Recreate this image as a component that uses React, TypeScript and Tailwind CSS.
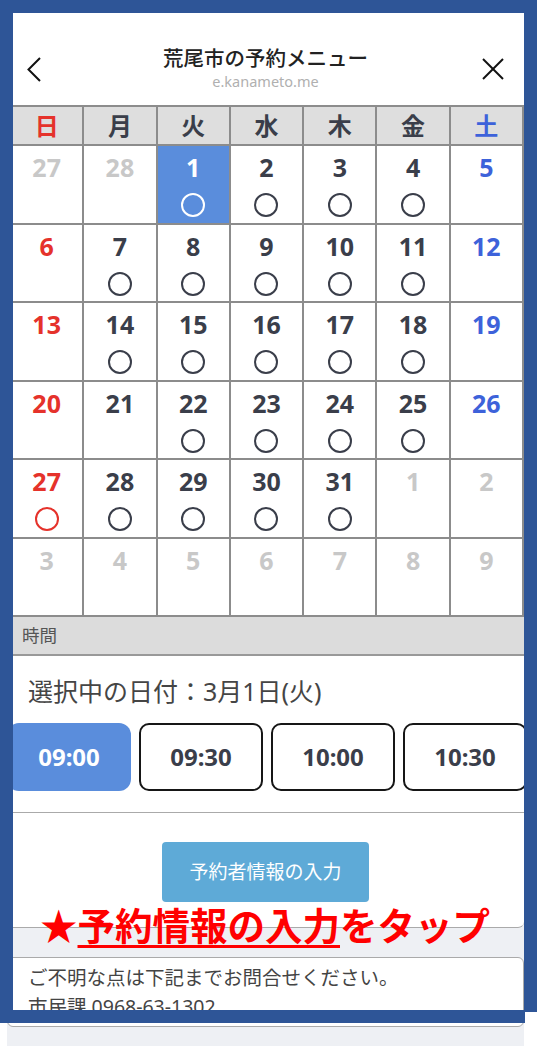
import React from "react";

type Day = { n: number; tone: "dim" | "sun" | "sat" | "normal"; mark?: boolean; selected?: boolean };

const FONT = { fontFamily: '"Noto Sans", "Noto Sans CJK JP", sans-serif' };

function buildWeeks(): Day[][] {
  const d = (n: number, tone: Day["tone"], mark = false, selected = false): Day => ({ n, tone, mark, selected });
  return [
    [d(27, "dim"), d(28, "dim"), d(1, "normal", true, true), d(2, "normal", true), d(3, "normal", true), d(4, "normal", true), d(5, "sat")],
    [d(6, "sun"), d(7, "normal", true), d(8, "normal", true), d(9, "normal", true), d(10, "normal", true), d(11, "normal", true), d(12, "sat")],
    [d(13, "sun"), d(14, "normal", true), d(15, "normal", true), d(16, "normal", true), d(17, "normal", true), d(18, "normal", true), d(19, "sat")],
    [d(20, "sun"), d(21, "normal"), d(22, "normal", true), d(23, "normal", true), d(24, "normal", true), d(25, "normal", true), d(26, "sat")],
    [d(27, "sun", true), d(28, "normal", true), d(29, "normal", true), d(30, "normal", true), d(31, "normal", true), d(1, "dim"), d(2, "dim")],
    [d(3, "dim"), d(4, "dim"), d(5, "dim"), d(6, "dim"), d(7, "dim"), d(8, "dim"), d(9, "dim")],
  ];
}

const weekdays = ["日", "月", "火", "水", "木", "金", "土"];
const times = ["09:00", "09:30", "10:00", "10:30"];

function DayCell({ day }: { day: Day }) {
  const color = day.selected
    ? "text-white"
    : day.tone === "dim"
    ? "text-[#c8c8c8]"
    : day.tone === "sun"
    ? "text-[#e5322b]"
    : day.tone === "sat"
    ? "text-[#3d62da]"
    : "text-[#3a3e4a]";
  const ring = day.selected ? "border-white" : day.tone === "sun" ? "border-[#e5322b]" : "border-[#3a3e4a]";
  return (
    <div className={`h-[76.5px] flex flex-col items-center pt-[6px] ${day.selected ? "bg-[#5a8ddc]" : "bg-white"}`}>
      <span className={`text-[25px] leading-[30px] font-bold ${color}`}>{day.n}</span>
      {day.mark && <div className={`mt-[11px] w-[24px] h-[24px] rounded-full border-[2.5px] ${ring}`} />}
    </div>
  );
}

export default function App() {
  const weeks = buildWeeks();
  return (
    <div className="relative w-[537px] h-[1046px] overflow-hidden bg-white" style={FONT}>
      <div className="ml-[7px] w-[517px] h-full bg-[#eef0f4]">
        <div className="bg-white border-b border-[#aaaaaa]">
          {/* header */}
          <div className="h-[105px] flex items-start">
            <div className="w-[60px] pt-[57px] pl-[20px]">
              <svg width="14" height="25" viewBox="0 0 14 25" fill="none" stroke="#111" strokeWidth="2">
                <polyline points="13,1 1.5,12.5 13,24" />
              </svg>
            </div>
            <div className="flex-1 flex flex-col items-center pt-[44px]">
              <span className="text-[20.5px] leading-[28px] font-medium text-[#222]">荒尾市の予約メニュー</span>
              <span className="text-[14.5px] leading-[18px] text-[#b0b0b0]">e.kanameto.me</span>
            </div>
            <div className="w-[60px] pt-[58px] pl-[18px]">
              <svg width="22" height="22" viewBox="0 0 22 22" fill="none" stroke="#111" strokeWidth="2">
                <line x1="1" y1="1" x2="21" y2="21" />
                <line x1="21" y1="1" x2="1" y2="21" />
              </svg>
            </div>
          </div>

          {/* calendar */}
          <div className="ml-[2px] w-[515px] grid grid-cols-7 gap-[2px] p-[2px] bg-[#8c8c8c]">
            {weekdays.map((w, i) => (
              <div
                key={w}
                className={`h-[37px] bg-[#dedede] flex items-center justify-center text-[24px] font-bold ${
                  i === 0 ? "text-[#e5322b]" : i === 6 ? "text-[#3d62da]" : "text-[#3a3e4a]"
                }`}
              >
                {w}
              </div>
            ))}
            {weeks.flat().map((day, i) => (
              <DayCell key={i} day={day} />
            ))}
          </div>

          {/* time */}
          <div className="h-[39px] bg-[#dcdcdc] border-b-2 border-[#999999] pl-[15px] flex items-center text-[17.5px] text-[#555]">
            時間
          </div>
          <div className="pt-[18px] pl-[21px] text-[25px] leading-[34px] text-[#454545]">選択中の日付：3月1日(火)</div>
          <div className="mt-[15px] pb-[21px] flex gap-[8px] overflow-hidden">
            {times.map((t, i) => (
              <div
                key={t}
                className={`shrink-0 w-[124px] h-[68px] flex items-center justify-center text-[24px] font-bold ${
                  i === 0 ? "rounded-[12px] bg-[#5a8ddc] text-white" : "rounded-[10px] border-[2.5px] border-[#161616] text-[#3a3e4a]"
                }`}
              >
                {t}
              </div>
            ))}
          </div>
        </div>

        <div className="bg-white rounded-b-[6px] border-b border-[#aaaaaa] pt-[29px] pb-[25px] flex justify-center">
          <div className="w-[207px] h-[60px] rounded-[4px] bg-[#5eaad7] flex items-center justify-center text-[19px] text-white">
            予約者情報の入力
          </div>
        </div>

        <div className="mt-[29px] bg-white border border-[#aaaaaa] rounded-[6px] pt-[5px] pb-[5px] pl-[20px] text-[19.5px] leading-[29px] text-[#444]">
          <p>ご不明な点は下記までお問合せください。</p>
          <p>市民課 0968-63-1302</p>
        </div>
      </div>

      {/* annotation */}
      <div className="absolute left-[40px] top-[903px] text-[37.5px] leading-[46px] font-bold text-[#ff0000] whitespace-nowrap">
        ★<span className="underline decoration-[3px] underline-offset-[5px]">予約情報の入力</span>をタップ
      </div>

      {/* blue frame */}
      <div className="absolute left-0 top-0 w-[537px] h-[1012px] border-t-[13px] border-l-[13px] border-r-[13px] border-[#2e5597] pointer-events-none" />
      <div className="absolute left-0 top-[1010px] w-[525px] h-[13px] bg-[#2e5597]" />
    </div>
  );
}
